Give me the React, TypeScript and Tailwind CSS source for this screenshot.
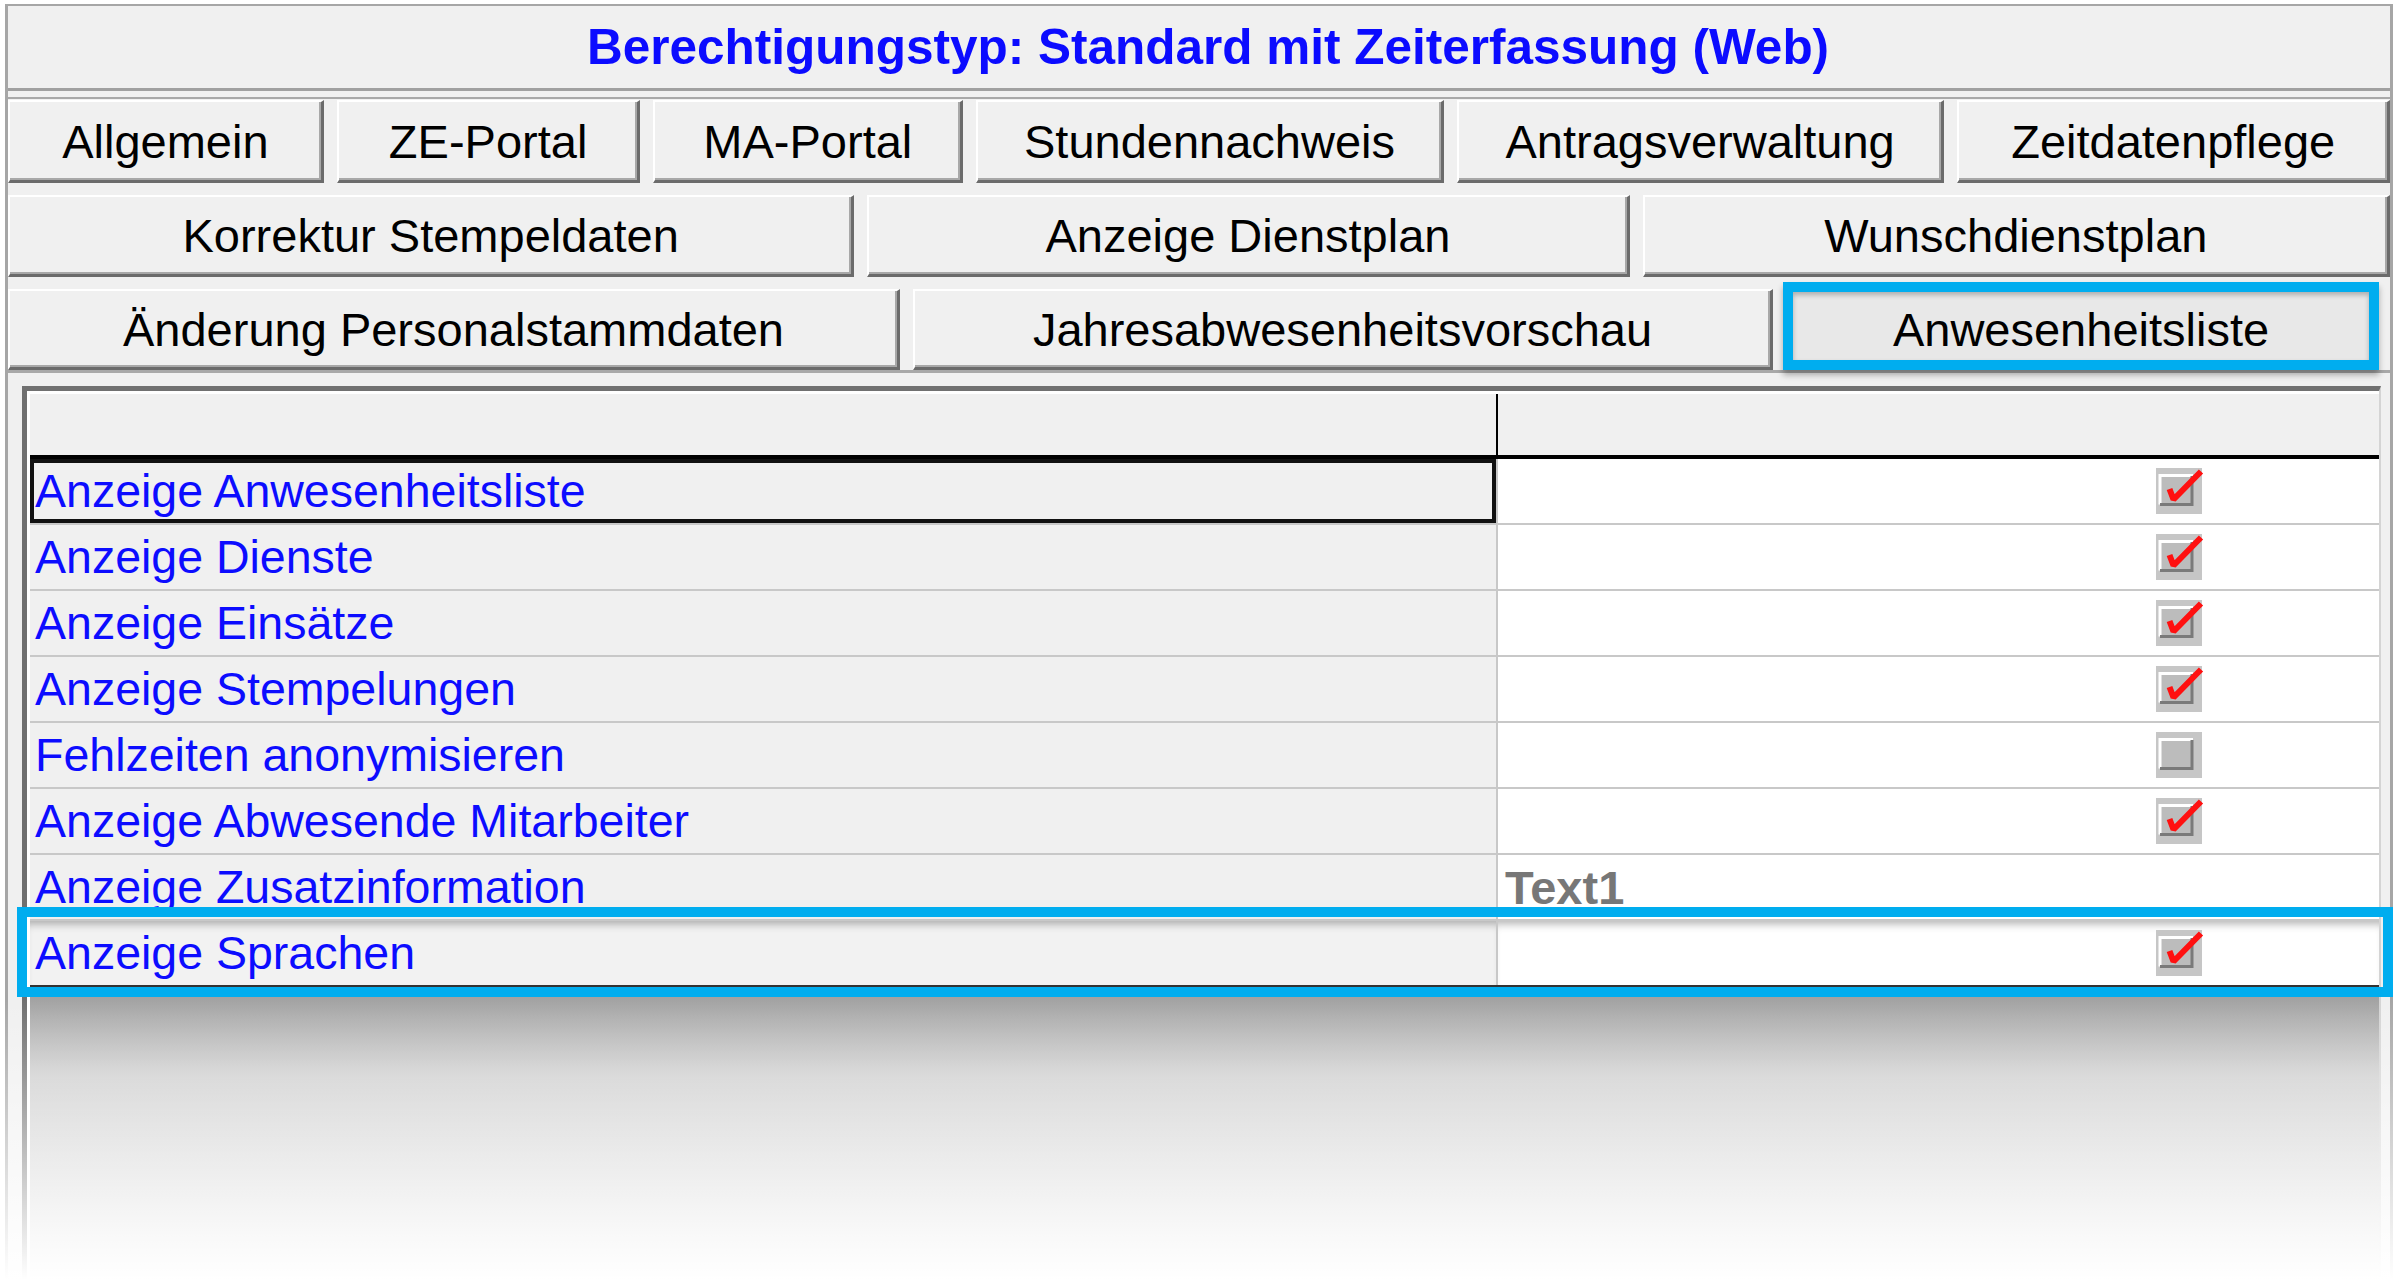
import React from "react";

const tabsRow1 = [
  { label: "Allgemein", w: "w-[316px]" },
  { label: "ZE-Portal", w: "w-[304px]" },
  { label: "MA-Portal", w: "w-[310px]" },
  { label: "Stundennachweis", w: "w-[468px]" },
  { label: "Antragsverwaltung", w: "w-[488px]" },
  { label: "Zeitdatenpflege", w: "w-[433px]" },
];

const tabsRow2 = [
  { label: "Korrektur Stempeldaten", w: "w-[847px]" },
  { label: "Anzeige Dienstplan", w: "w-[763px]" },
  { label: "Wunschdienstplan", w: "w-[748px]" },
];

type Row = { label: string; value: "on" | "off" | string };

const rows: Row[] = [
  { label: "Anzeige Anwesenheitsliste", value: "on" },
  { label: "Anzeige Dienste", value: "on" },
  { label: "Anzeige Einsätze", value: "on" },
  { label: "Anzeige Stempelungen", value: "on" },
  { label: "Fehlzeiten anonymisieren", value: "off" },
  { label: "Anzeige Abwesende Mitarbeiter", value: "on" },
  { label: "Anzeige Zusatzinformation", value: "Text1" },
  { label: "Anzeige Sprachen", value: "on" },
];

const TabButton = ({ label, w }: { label: string; w: string }) => (
  <div
    className={`${w} h-full flex items-center justify-center bg-[#f0f0f0] border-t-2 border-l-2 border-t-white border-l-white border-b-[3px] border-r-[3px] border-b-[#6b6b6b] border-r-[#6b6b6b] shadow-[inset_-2px_-2px_0_#a8a8a8] text-[47px] text-black leading-none`}
  >
    {label}
  </div>
);

const CheckBox = ({ checked }: { checked: boolean }) => (
  <svg width="46" height="46" viewBox="0 0 46 46" className="overflow-visible">
    <rect x="0" y="0" width="46" height="46" fill="#c6c6c6" />
    <rect x="4" y="7" width="33" height="30" fill="#bcbcbc" />
    <path d="M4 36.5V7.5H37" stroke="#ffffff" strokeWidth="3" fill="none" />
    <path d="M4 36.5H36V8" stroke="#7a7a7a" strokeWidth="3" fill="none" />
    {checked && (
      <path
        d="M13.5 21 L17.5 31.5 L45 3.5"
        stroke="#ff1010"
        strokeWidth="6"
        fill="none"
        strokeLinejoin="bevel"
      />
    )}
  </svg>
);

export default function App() {
  return (
    <div className="relative w-[2398px] h-[1280px] bg-white overflow-hidden flex flex-col font-['Liberation_Sans',Arial,sans-serif]">
      <div className="ml-[5px] mt-[4px] w-[2388px] flex-1 flex flex-col bg-[#f0f0f0] border-l-[3px] border-r-[3px] border-t-2 border-[#a6a6a6]">
        {/* title */}
        <div className="h-[85px] pl-[18px] flex items-center justify-center border-b-[3px] border-[#a0a0a0]">
          <span className="text-[49.5px] font-bold text-[#0b0bff] leading-none">
            Berechtigungstyp: Standard mit Zeiterfassung (Web)
          </span>
        </div>

        {/* tabs */}
        <div className="mt-[6px] pt-[1px] border-t-2 border-[#a8a8a8] border-b-[3px] border-b-[#a8a8a8] flex flex-col gap-[12px]">
          <div className="h-[83px] flex gap-[13px]">
            {tabsRow1.map((t) => (
              <TabButton key={t.label} label={t.label} w={t.w} />
            ))}
          </div>
          <div className="h-[82px] flex gap-[13px]">
            {tabsRow2.map((t) => (
              <TabButton key={t.label} label={t.label} w={t.w} />
            ))}
          </div>
          <div className="h-[81px] flex items-end">
            <div className="h-full">
              <TabButton label="Änderung Personalstammdaten" w="w-[892px]" />
            </div>
            <div className="h-full ml-[13px]">
              <TabButton label="Jahresabwesenheitsvorschau" w="w-[860px]" />
            </div>
            <div className="ml-[10px] w-[596px] h-[88px] border-[10px] border-[#00adef] shadow-[0_5px_6px_rgba(0,0,0,0.3)]">
              <div className="h-full pt-[6px] flex items-center justify-center bg-[#e8e8e8] shadow-[inset_0_3px_5px_rgba(0,0,0,0.25)] text-[47px] text-black leading-none">
                Anwesenheitsliste
              </div>
            </div>
          </div>
        </div>

        {/* grid */}
        <div className="mt-[13px] ml-[14px] w-[2359px] flex-1 flex flex-col border-l-[5px] border-t-[5px] border-[#707070] border-r-2 border-r-[#d4d4d4]">
          <div className="flex-1 flex flex-col border-l-[3px] border-t-[3px] border-white">
            <div className="h-[65px] flex border-b-4 border-black">
              <div className="w-[1466px] bg-[#f0f0f0]" />
              <div className="w-[2px] bg-black" />
              <div className="flex-1 bg-[#f0f0f0]" />
            </div>
            {rows.map((r, i) => {
              const last = i === rows.length - 1;
              return (
                <div
                  key={r.label}
                  className={`h-[66px] flex border-b-2 ${
                    last ? "border-[#333333]" : "border-[#c8c8c8]"
                  }`}
                >
                  <div
                    className={`w-[1466px] flex items-center pl-[5px] bg-[#f0f0f0] text-[46.5px] text-[#0c0cff] leading-none whitespace-nowrap overflow-hidden ${
                      i === 0 ? "shadow-[inset_0_0_0_4px_#111111]" : ""
                    } ${last ? "bg-[#f2f2f2] shadow-[inset_0_9px_8px_-6px_rgba(0,0,0,0.3)]" : ""}`}
                  >
                    {r.label}
                  </div>
                  <div className="w-[2px] bg-[#c8c8c8]" />
                  <div
                    className={`flex-1 flex items-center bg-white ${
                      last ? "shadow-[inset_0_9px_8px_-6px_rgba(0,0,0,0.3)]" : ""
                    } ${
                      r.value === "on" || r.value === "off"
                        ? "justify-end pr-[177px]"
                        : "pl-[7px]"
                    }`}
                  >
                    {r.value === "on" || r.value === "off" ? (
                      <CheckBox checked={r.value === "on"} />
                    ) : (
                      <span className="text-[47px] font-bold text-[#777777] leading-none">
                        {r.value}
                      </span>
                    )}
                  </div>
                </div>
              );
            })}
            <div className="flex-1 bg-linear-to-b from-[#9c9c9c] via-[#cdcdcd] via-30% to-[#dadada]" />
          </div>
        </div>
      </div>

      {/* highlight of last row */}
      <div className="absolute left-[17px] top-[907px] w-[2376px] h-[90px] border-[10px] border-[#00adef] pointer-events-none" />
      {/* fade-out at the bottom */}
      <div className="absolute left-0 right-0 top-[1000px] bottom-0 bg-linear-to-b from-white/0 to-white pointer-events-none" />
    </div>
  );
}
